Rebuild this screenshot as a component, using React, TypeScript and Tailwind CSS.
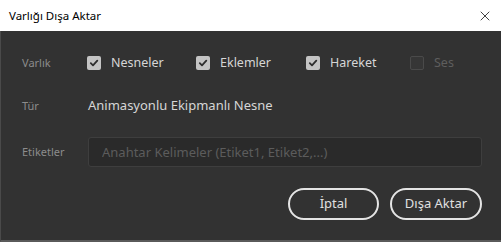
import { X } from 'lucide-react';

function Check({ checked, disabled }: { checked?: boolean; disabled?: boolean }) {
  if (disabled) {
    return <span className="w-[14px] h-[14px] rounded-[2px] border border-[#4a4a4a] bg-[#363636] shrink-0" />;
  }
  return (
    <span className="w-[14px] h-[14px] rounded-[2px] bg-[#c4c4c4] flex items-center justify-center shrink-0">
      {checked && (
        <svg width="10" height="10" viewBox="0 0 10 10" fill="none">
          <path d="M1.8 5.2 L4 7.3 L8.3 2.6" stroke="#2e2e2e" strokeWidth="1.8" strokeLinecap="round" strokeLinejoin="round" />
        </svg>
      )}
    </span>
  );
}

const OPTIONS = [
  { label: 'Nesneler', checked: true, width: 'w-[109px]' },
  { label: 'Eklemler', checked: true, width: 'w-[110px]' },
  { label: 'Hareket', checked: true, width: 'w-[104px]' },
  { label: 'Ses', disabled: true, width: '' },
];

export default function App() {
  return (
    <div className="w-[501px] h-[242px] flex flex-col bg-[#323232] font-['Noto_Sans',sans-serif]">
      {/* Title bar */}
      <div className="h-[31px] bg-white flex items-center justify-between pl-[9px] pr-[8px] shrink-0">
        <span className="text-[11.5px] text-black font-['Noto_Sans',sans-serif]">Varlığı Dışa Aktar</span>
        <X size={16} strokeWidth={1.2} className="text-[#111]" />
      </div>

      {/* Body */}
      <div className="flex-1 flex flex-col border-l border-[#4a4a4a] border-b-2 border-b-[#5a5a5a] pl-[21px] pr-[19px] pt-[22px]">
        <div className="h-[20px] flex items-center">
          <span className="w-[65px] text-[11px] text-[#8c8c8c]">Varlık</span>
          {OPTIONS.map((o) => (
            <div key={o.label} className={`flex items-center gap-[10px] ${o.width}`}>
              <Check checked={o.checked} disabled={o.disabled} />
              <span className={`text-[12.5px] ${o.disabled ? 'text-[#5e5e5e]' : 'text-[#d6d6d6]'}`}>{o.label}</span>
            </div>
          ))}
        </div>

        <div className="h-[20px] flex items-center mt-[23px]">
          <span className="w-[66px] text-[11px] text-[#8c8c8c]">Tür</span>
          <span className="text-[13px] text-[#d6d6d6]">Animasyonlu Ekipmanlı Nesne</span>
        </div>

        <div className="flex items-center mt-[21px]">
          <span className="w-[66px] text-[11px] text-[#8c8c8c]">Etiketler</span>
          <input
            className="flex-1 h-[30px] rounded-[3px] bg-[#2a2a2a] border border-[#3e3e3e] px-[13px] text-[13px] text-[#d6d6d6] placeholder:text-[#5c5c5c] outline-none"
            placeholder="Anahtar Kelimeler (Etiket1, Etiket2,...)"
          />
        </div>

        <div className="flex justify-end gap-[11px] mt-[21px]">
          <button className="w-[91px] h-[32px] rounded-full border-2 border-[#e4e4e4] text-[13px] text-[#e0e0e0]">
            İptal
          </button>
          <button className="w-[92px] h-[32px] rounded-full border-2 border-[#e4e4e4] text-[13px] text-[#e0e0e0]">
            Dışa Aktar
          </button>
        </div>
      </div>
    </div>
  );
}
